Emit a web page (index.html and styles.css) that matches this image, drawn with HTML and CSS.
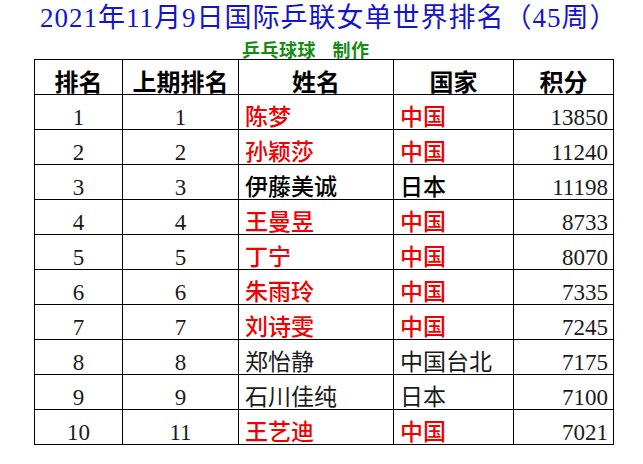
FILE: index.html
```html
<!DOCTYPE html>
<html lang="zh-CN">
<head>
<meta charset="utf-8">
<title>2021年11月9日国际乒联女单世界排名</title>
<link rel="stylesheet" href="styles.css">
</head>
<body>
<div class="page">
  <h1 class="title">2021年11月9日国际乒联女单世界排名（45周）</h1>
  <div class="subtitle">乒乓球球 制作</div>
  <table class="rank">
    <colgroup>
      <col class="c1"><col class="c2"><col class="c3"><col class="c4"><col class="c5">
    </colgroup>
    <thead>
      <tr><th>排名</th><th>上期排名</th><th>姓名</th><th>国家</th><th>积分</th></tr>
    </thead>
    <tbody>
      <tr><td class="num">1</td><td class="num">1</td><td class="name red">陈梦</td><td class="nat red">中国</td><td class="pts">13850</td></tr>
      <tr><td class="num">2</td><td class="num">2</td><td class="name red">孙颖莎</td><td class="nat red">中国</td><td class="pts">11240</td></tr>
      <tr><td class="num">3</td><td class="num">3</td><td class="name strong">伊藤美诚</td><td class="nat strong">日本</td><td class="pts">11198</td></tr>
      <tr><td class="num">4</td><td class="num">4</td><td class="name red">王曼昱</td><td class="nat red">中国</td><td class="pts">8733</td></tr>
      <tr><td class="num">5</td><td class="num">5</td><td class="name red">丁宁</td><td class="nat red">中国</td><td class="pts">8070</td></tr>
      <tr><td class="num">6</td><td class="num">6</td><td class="name red">朱雨玲</td><td class="nat red">中国</td><td class="pts">7335</td></tr>
      <tr><td class="num">7</td><td class="num">7</td><td class="name red">刘诗雯</td><td class="nat red">中国</td><td class="pts">7245</td></tr>
      <tr><td class="num">8</td><td class="num">8</td><td class="name">郑怡静</td><td class="nat">中国台北</td><td class="pts">7175</td></tr>
      <tr><td class="num">9</td><td class="num">9</td><td class="name">石川佳纯</td><td class="nat">日本</td><td class="pts">7100</td></tr>
      <tr><td class="num">10</td><td class="num">11</td><td class="name red">王艺迪</td><td class="nat red">中国</td><td class="pts">7021</td></tr>
    </tbody>
  </table>
</div>
</body>
</html>
```
FILE: styles.css
```css
html, body {
  margin: 0;
  padding: 0;
  background: #ffffff;
}

.page {
  width: 643px;
  padding-top: 5px;
}

.title {
  margin: 0;
  padding-left: 40px;
  text-align: left;
  font-family: "Liberation Serif", "Noto Sans CJK SC", serif;
  font-size: 27px;
  line-height: 27px;
  font-weight: 400;
  letter-spacing: 1px;
  color: #1414cc;
  white-space: nowrap;
}

.subtitle {
  margin-top: 8px;
  padding-left: 242px;
  text-align: left;
  font-family: "Noto Sans CJK SC", sans-serif;
  font-size: 18px;
  line-height: 18px;
  font-weight: 700;
  letter-spacing: 0.5px;
  color: #148c14;
  word-spacing: 12px;
}

.rank {
  margin: 1px 0 0 34px;
  border-collapse: collapse;
  table-layout: fixed;
  width: 579px;
}

.c1 { width: 88px; }
.c2 { width: 116px; }
.c3 { width: 155px; }
.c4 { width: 120px; }
.c5 { width: 100px; }

.rank tr {
  height: 35px;
}

.rank th,
.rank td {
  border: 1px solid #000;
  padding: 0;
  vertical-align: bottom;
  white-space: nowrap;
}

.rank th {
  font-family: "Noto Sans CJK SC", sans-serif;
  font-size: 24px;
  line-height: 24px;
  font-weight: 600;
  color: #000;
  text-align: center;
  padding-bottom: 1px;
}

.num,
.pts {
  font-family: "Liberation Serif", serif;
  font-size: 23px;
  line-height: 23px;
  color: #1a1a1a;
}

.num {
  text-align: center;
}

.pts {
  text-align: right;
  padding-right: 5px !important;
}

.name,
.nat {
  font-family: "Noto Sans CJK SC", sans-serif;
  font-size: 23px;
  line-height: 23px;
  color: #1a1a1a;
  text-align: left;
  padding-left: 6px !important;
  padding-bottom: 2px !important;
}

.red {
  color: #f00000;
  font-weight: 500;
}

.strong {
  color: #000;
  font-weight: 500;
}
```
